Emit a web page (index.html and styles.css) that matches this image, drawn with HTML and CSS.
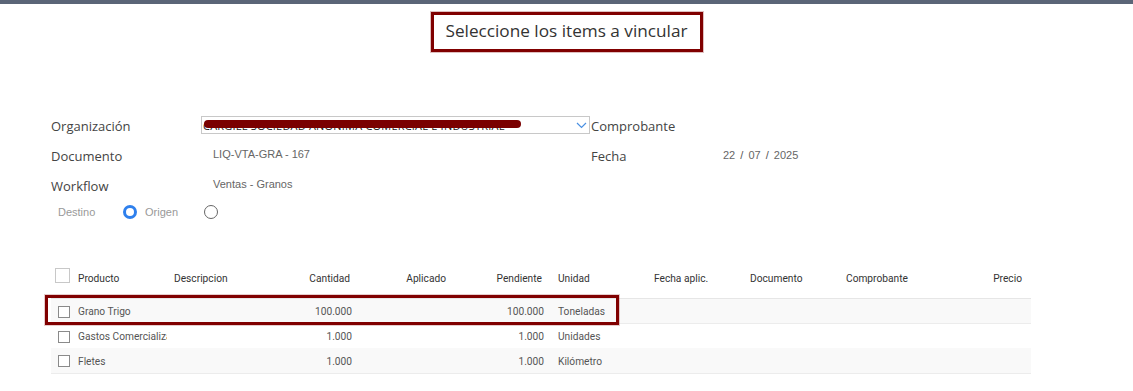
FILE: index.html
```html
<!DOCTYPE html>
<html lang="es">
<head>
<meta charset="utf-8">
<title>Seleccione los items a vincular</title>
<link rel="stylesheet" href="styles.css">
</head>
<body>
<div class="topbar"></div>
<div class="title-wrap">
  <h1 class="title">Seleccione los items a vincular</h1>
</div>
<div class="form">
  <div class="label">Organización</div>
  <div class="cell">
    <div class="select">
      <span class="select-text">CARGILL SOCIEDAD ANONIMA COMERCIAL E INDUSTRIAL</span>
      <span class="redact"></span>
      <svg class="chev" width="11" height="7" viewBox="0 0 11 7"><path d="M1 1 L5.5 5.5 L10 1" fill="none" stroke="#4a90e2" stroke-width="1.2"/></svg>
    </div>
  </div>
  <div class="label">Comprobante</div>
  <div class="cell"></div>

  <div class="label">Documento</div>
  <div class="value">LIQ-VTA-GRA - 167</div>
  <div class="label">Fecha</div>
  <div class="value date">22 <span class="sl">/</span> 07 <span class="sl">/</span> 2025</div>

  <div class="label">Workflow</div>
  <div class="value">Ventas - Granos</div>
  <div class="label"></div>
  <div class="cell"></div>
</div>
<div class="radios">
  <span class="rlabel destino">Destino</span>
  <span class="radio checked"></span>
  <span class="rlabel origen">Origen</span>
  <span class="radio"></span>
</div>
<div class="table-wrap">
  <table class="grid">
    <colgroup>
      <col class="c-chk">
      <col class="c"><col class="c"><col class="c"><col class="c"><col class="c">
      <col class="c"><col class="c"><col class="c"><col class="c"><col class="c-last">
    </colgroup>
    <thead>
      <tr>
        <th><span class="chk big"></span></th>
        <th>Producto</th>
        <th>Descripcion</th>
        <th class="num">Cantidad</th>
        <th class="num">Aplicado</th>
        <th class="num">Pendiente</th>
        <th>Unidad</th>
        <th>Fecha aplic.</th>
        <th>Documento</th>
        <th>Comprobante</th>
        <th class="num last">Precio</th>
      </tr>
    </thead>
    <tbody>
      <tr class="odd hl">
        <td><span class="chk"></span></td>
        <td><div class="clip">Grano Trigo</div></td>
        <td></td>
        <td class="num">100.000</td>
        <td class="num"></td>
        <td class="num">100.000</td>
        <td>Toneladas</td>
        <td></td><td></td><td></td><td></td>
      </tr>
      <tr>
        <td><span class="chk"></span></td>
        <td><div class="clip">Gastos Comercialización</div></td>
        <td></td>
        <td class="num">1.000</td>
        <td class="num"></td>
        <td class="num">1.000</td>
        <td>Unidades</td>
        <td></td><td></td><td></td><td></td>
      </tr>
      <tr class="odd">
        <td><span class="chk"></span></td>
        <td><div class="clip">Fletes</div></td>
        <td></td>
        <td class="num">1.000</td>
        <td class="num"></td>
        <td class="num">1.000</td>
        <td>Kilómetro</td>
        <td></td><td></td><td></td><td></td>
      </tr>
    </tbody>
  </table>
  <div class="row-highlight"></div>
</div>
</body>
</html>
```
FILE: styles.css
```css
html, body {
  margin: 0;
  padding: 0;
  background: #fff;
}
body {
  font-family: "Open Sans", "Noto Sans", sans-serif;
  color: #444;
  width: 1133px;
  height: 391px;
  overflow: hidden;
}
.topbar {
  height: 4px;
  background: #5b6577;
}
.title-wrap {
  display: flex;
  justify-content: center;
  padding-top: 8px;
}
.title {
  margin: 0;
  box-sizing: border-box;
  width: 272px;
  height: 40px;
  padding-bottom: 3px;
  border: 3px solid #800000;
  box-shadow: 0 0 0 1px rgba(128,0,0,0.25);
  display: flex;
  align-items: center;
  justify-content: center;
  font-weight: 400;
  font-size: 17.2px;
  color: #333;
  white-space: nowrap;
}
.form {
  margin-top: 59px;
  padding-left: 51px;
  display: grid;
  grid-template-columns: 150px 390px 132px 200px;
  grid-auto-rows: 30px;
}
.label {
  font-size: 13px;
  color: #444;
  display: flex;
  align-items: center;
}
.cell {
  display: flex;
  align-items: center;
}
.value {
  font-family: "Liberation Sans", Arial, sans-serif;
  font-size: 11px;
  color: #666;
  padding-left: 12px;
  padding-top: 7px;
}
.value.date {
  padding-left: 0;
  padding-top: 8px;
}
.sl {
  padding: 0 2px;
  color: #555;
}
.select {
  position: relative;
  box-sizing: border-box;
  width: 389px;
  height: 18px;
  border: 1px solid #c8c8c8;
  display: flex;
  align-items: center;
  margin-top: -2px;
  overflow: hidden;
}
.select-text {
  font-size: 11px;
  color: #222;
  padding-left: 1px;
  white-space: nowrap;
  overflow: hidden;
  letter-spacing: 0.2px;
}
.redact {
  position: absolute;
  left: 2px;
  top: 3px;
  width: 317px;
  height: 8px;
  border-radius: 4px;
  background: #7a0000;
}
.chev {
  position: absolute;
  right: 2px;
  top: 5px;
  background: #fff;
}
.radios {
  display: flex;
  align-items: center;
  height: 22px;
  padding-left: 58px;
  font-family: "Liberation Sans", Arial, sans-serif;
  font-size: 11px;
  color: #999;
}
.rlabel.destino { width: 65px; }
.rlabel.origen { width: 59px; }
.radio {
  box-sizing: border-box;
  width: 14px;
  height: 14px;
  border-radius: 50%;
  border: 1px solid #666;
  margin-right: 8px;
}
.radio.checked {
  border: 3.5px solid #2f80ed;
}
.table-wrap {
  position: relative;
  margin-top: 40px;
  margin-left: 51px;
  width: 980px;
}
.grid {
  border-collapse: collapse;
  table-layout: fixed;
  width: 980px;
  font-family: Roboto, "Liberation Sans", Arial, sans-serif;
  font-size: 10.2px;
}
col.c-chk { width: 23px; }
col.c { width: 96px; }
col.c-last { width: 93px; }
.grid th {
  font-weight: 400;
  color: #333;
  text-align: left;
  height: 35px;
  padding: 0 4px 4px;
  box-sizing: border-box;
  vertical-align: middle;
  border-bottom: 1px solid #e6e6e6;
  white-space: nowrap;
}
.grid td {
  height: 25px;
  padding: 2px 4px 0;
  box-sizing: border-box;
  color: #555;
  vertical-align: middle;
  white-space: nowrap;
}
.grid tbody tr { border-bottom: 1px solid #ececec; }
.grid tbody tr:nth-child(2) { border-bottom: none; }
.grid tbody tr.odd { background: #f9f9f9; }
.grid th.num, .grid td.num {
  text-align: right;
  padding-right: 10px;
}
.grid th.num { padding-right: 12px; }
.grid th.num.last { padding-right: 9px; }
.grid th:first-child, .grid td:first-child {
  padding-left: 4px;
  padding-right: 0;
}
.clip {
  overflow: hidden;
  width: 89px;
}
.chk {
  display: block;
  box-sizing: border-box;
  width: 12px;
  height: 12px;
  border: 1px solid #8a8a8a;
  margin-left: 3px;
  background: #fff;
}
.chk.big {
  width: 15px;
  height: 15px;
  border-color: #c8c8c8;
  margin-left: 0;
  margin-top: -6px;
}
.row-highlight {
  position: absolute;
  left: -6px;
  top: 32px;
  width: 574px;
  height: 30px;
  box-sizing: border-box;
  border: 3px solid #800000;
  box-shadow: 0 0 0 1px rgba(128,0,0,0.2);
  pointer-events: none;
}
```
